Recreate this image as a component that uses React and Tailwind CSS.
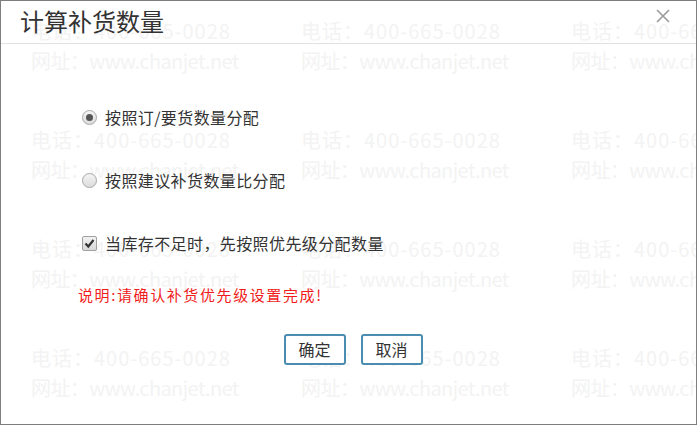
import React, { useState } from 'react';

const font = { fontFamily: '"Noto Sans CJK SC", "Noto Sans", sans-serif' };

const Watermark = () => {
  const tiles = Array.from({ length: 12 });
  return (
    <div className="absolute inset-0 pointer-events-none select-none overflow-hidden">
      <div className="grid grid-cols-[270px_270px_270px] auto-rows-[109px] pl-[30px] pt-[15px]">
        {tiles.map((_, i) => (
          <div key={i} className="flex flex-col text-[20px] leading-[30px] text-[#f3f3f3] whitespace-nowrap">
            <span className="tracking-[1px]">电话：400-665-0028</span>
            <span className="tracking-[-0.6px]">网址：www.chanjet.net</span>
          </div>
        ))}
      </div>
    </div>
  );
};

export default function App() {
  const [mode, setMode] = useState('order');
  const [priority, setPriority] = useState(true);

  return (
    <div className="w-[697px] h-[425px] relative bg-white border border-[#7d7d7d] overflow-hidden text-[#333]" style={font}>
      <Watermark />

      <div className="relative flex flex-col h-full">
        {/* Title bar */}
        <div className="h-[43px] flex items-start justify-between border-b border-[#e2e2e2] pl-[19px] pr-[26px]">
          <h1 className="text-[24px] leading-[36px] pt-[2px] text-[#333]">计算补货数量</h1>
          <button className="mt-[8px] text-[#9a9a9a]" aria-label="关闭">
            <svg width="14" height="14" viewBox="0 0 14 14" stroke="currentColor" strokeWidth="1.6">
              <path d="M1 1 L13 13 M13 1 L1 13" />
            </svg>
          </button>
        </div>

        {/* Content */}
        <div className="flex flex-col pl-[81px] pt-[61px] text-[16px] tracking-[0.4px] text-[#333]">
          <label className="flex items-center gap-[8px] h-[24px]" onClick={() => setMode('order')}>
            <Radio checked={mode === 'order'} />
            <span>按照订/要货数量分配</span>
          </label>
          <label className="flex items-center gap-[8px] h-[24px] mt-[39px]" onClick={() => setMode('suggest')}>
            <Radio checked={mode === 'suggest'} />
            <span>按照建议补货数量比分配</span>
          </label>
          <label className="flex items-center gap-[8px] h-[24px] mt-[39px]" onClick={() => setPriority(!priority)}>
            <Check checked={priority} />
            <span>当库存不足时，先按照优先级分配数量</span>
          </label>
          <p className="-ml-[4px] mt-[29px] text-[15px] tracking-[1.6px] text-[#f01c1c]">说明:请确认补货优先级设置完成!</p>
        </div>

        <div className="flex justify-center gap-[15px] mt-[27px] pl-[9px]">
          <button className="w-[62px] h-[31px] rounded-[3px] border-2 border-[#4a8db0] text-[16px] text-[#333] bg-white">确定</button>
          <button className="w-[62px] h-[31px] rounded-[3px] border-2 border-[#4a8db0] text-[16px] text-[#333] bg-white">取消</button>
        </div>
      </div>
    </div>
  );
}

function Radio({ checked }) {
  return (
    <span className="w-[15px] h-[15px] rounded-full border border-[#a8a8a8] bg-gradient-to-b from-[#f4f4f4] to-[#dcdcdc] flex items-center justify-center shrink-0">
      {checked && <span className="w-[7px] h-[7px] rounded-full bg-[#555]" />}
    </span>
  );
}

function Check({ checked }) {
  return (
    <span className="w-[15px] h-[15px] rounded-[2px] border border-[#a0a0a0] bg-gradient-to-b from-[#f2f2f2] to-[#d8d8d8] flex items-center justify-center shrink-0">
      {checked && (
        <svg width="11" height="11" viewBox="0 0 11 11" fill="none" stroke="#333" strokeWidth="2.2">
          <path d="M1.5 5.5 L4.3 8.5 L9.5 2" />
        </svg>
      )}
    </span>
  );
}
